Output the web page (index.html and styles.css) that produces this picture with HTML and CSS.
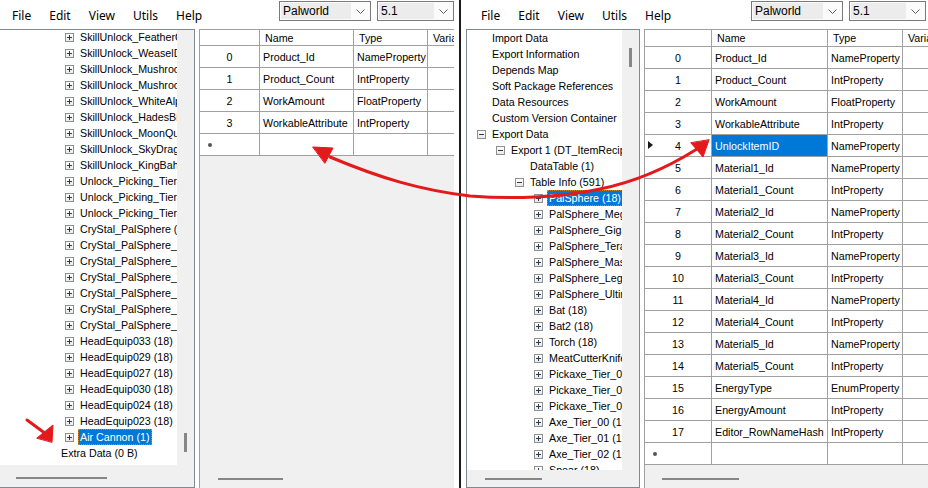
FILE: index.html
```html
<!DOCTYPE html>
<html>
<head>
<meta charset="utf-8">
<title>UAssetGUI comparison</title>
<link rel="stylesheet" href="styles.css">
</head>
<body>
<div class="screen">
  <div class="win win-left">
    <div class="menubar">
      <ul class="menu"><li>File</li><li>Edit</li><li>View</li><li>Utils</li><li>Help</li></ul>
      <div class="combo"><span class="combo-text">Palworld</span><span class="combo-arrow"><svg width="9" height="5" viewBox="0 0 9 5"><path d="M0.5 0.5 L4.5 4.5 L8.5 0.5" fill="none" stroke="#606060"/></svg></span></div>
      <div class="combo"><span class="combo-text">5.1</span><span class="combo-arrow"><svg width="9" height="5" viewBox="0 0 9 5"><path d="M0.5 0.5 L4.5 4.5 L8.5 0.5" fill="none" stroke="#606060"/></svg></span></div>
    </div>
    <div class="main">
      <div class="tree">
        <div class="tree-body">
          <div class="tree-view">
            <div class="tree-rows">
              <div class="node l3"><i class="exp plus"></i><span class="lbl">SkillUnlock_FeatherOstrich (18)</span></div>
              <div class="node l3"><i class="exp plus"></i><span class="lbl">SkillUnlock_WeaselDragon (18)</span></div>
              <div class="node l3"><i class="exp plus"></i><span class="lbl">SkillUnlock_Mushroom (18)</span></div>
              <div class="node l3"><i class="exp plus"></i><span class="lbl">SkillUnlock_MushroomDragon (18)</span></div>
              <div class="node l3"><i class="exp plus"></i><span class="lbl">SkillUnlock_WhiteAlpaca (18)</span></div>
              <div class="node l3"><i class="exp plus"></i><span class="lbl">SkillUnlock_HadesBird (18)</span></div>
              <div class="node l3"><i class="exp plus"></i><span class="lbl">SkillUnlock_MoonQueen (18)</span></div>
              <div class="node l3"><i class="exp plus"></i><span class="lbl">SkillUnlock_SkyDragon (18)</span></div>
              <div class="node l3"><i class="exp plus"></i><span class="lbl">SkillUnlock_KingBahamut (18)</span></div>
              <div class="node l3"><i class="exp plus"></i><span class="lbl">Unlock_Picking_Tier1 (18)</span></div>
              <div class="node l3"><i class="exp plus"></i><span class="lbl">Unlock_Picking_Tier2 (18)</span></div>
              <div class="node l3"><i class="exp plus"></i><span class="lbl">Unlock_Picking_Tier3 (18)</span></div>
              <div class="node l3"><i class="exp plus"></i><span class="lbl">CryStal_PalSphere (18)</span></div>
              <div class="node l3"><i class="exp plus"></i><span class="lbl">CryStal_PalSphere_Mega (18)</span></div>
              <div class="node l3"><i class="exp plus"></i><span class="lbl">CryStal_PalSphere_Giga (18)</span></div>
              <div class="node l3"><i class="exp plus"></i><span class="lbl">CryStal_PalSphere_Tera (18)</span></div>
              <div class="node l3"><i class="exp plus"></i><span class="lbl">CryStal_PalSphere_Master (18)</span></div>
              <div class="node l3"><i class="exp plus"></i><span class="lbl">CryStal_PalSphere_Legend (18)</span></div>
              <div class="node l3"><i class="exp plus"></i><span class="lbl">CryStal_PalSphere_Ultimate (18)</span></div>
              <div class="node l3"><i class="exp plus"></i><span class="lbl">HeadEquip033 (18)</span></div>
              <div class="node l3"><i class="exp plus"></i><span class="lbl">HeadEquip029 (18)</span></div>
              <div class="node l3"><i class="exp plus"></i><span class="lbl">HeadEquip027 (18)</span></div>
              <div class="node l3"><i class="exp plus"></i><span class="lbl">HeadEquip030 (18)</span></div>
              <div class="node l3"><i class="exp plus"></i><span class="lbl">HeadEquip024 (18)</span></div>
              <div class="node l3"><i class="exp plus"></i><span class="lbl">HeadEquip023 (18)</span></div>
              <div class="node l3"><i class="exp plus"></i><span class="lbl sel">Air Cannon (1)</span></div>
              <div class="node l2"><i class="exp none"></i><span class="lbl">Extra Data (0 B)</span></div>
            </div>
          </div>
          <div class="vscroll"><div class="vthumb"></div></div>
        </div>
        <div class="hscroll"><div class="hthumb"></div></div>
      </div>
      <div class="grid">
        <div class="grow hdr"><div class="cell rh"></div><div class="cell c-name">Name</div><div class="cell c-type">Type</div><div class="cell c-var">Variant</div></div>
        <div class="grow"><div class="cell rh">0</div><div class="cell c-name">Product_Id</div><div class="cell c-type">NameProperty</div><div class="cell c-var"></div></div>
        <div class="grow"><div class="cell rh">1</div><div class="cell c-name">Product_Count</div><div class="cell c-type">IntProperty</div><div class="cell c-var"></div></div>
        <div class="grow"><div class="cell rh">2</div><div class="cell c-name">WorkAmount</div><div class="cell c-type">FloatProperty</div><div class="cell c-var"></div></div>
        <div class="grow"><div class="cell rh">3</div><div class="cell c-name">WorkableAttribute</div><div class="cell c-type">IntProperty</div><div class="cell c-var"></div></div>
        <div class="grow"><div class="cell rh newrow"><i class="star"></i></div><div class="cell c-name"></div><div class="cell c-type"></div><div class="cell c-var"></div></div>
        <div class="grid-fill"></div>
        <div class="ghscroll"><div class="hthumb"></div></div>
      </div>
    </div>
  </div>

  <div class="divider"></div>

  <div class="win win-right">
    <div class="menubar">
      <ul class="menu"><li>File</li><li>Edit</li><li>View</li><li>Utils</li><li>Help</li></ul>
      <div class="combo"><span class="combo-text">Palworld</span><span class="combo-arrow"><svg width="9" height="5" viewBox="0 0 9 5"><path d="M0.5 0.5 L4.5 4.5 L8.5 0.5" fill="none" stroke="#606060"/></svg></span></div>
      <div class="combo"><span class="combo-text">5.1</span><span class="combo-arrow"><svg width="9" height="5" viewBox="0 0 9 5"><path d="M0.5 0.5 L4.5 4.5 L8.5 0.5" fill="none" stroke="#606060"/></svg></span></div>
    </div>
    <div class="main">
      <div class="tree">
        <div class="tree-body">
          <div class="tree-view">
            <div class="tree-rows">
              <div class="node l0"><i class="exp none"></i><span class="lbl">Import Data</span></div>
              <div class="node l0"><i class="exp none"></i><span class="lbl">Export Information</span></div>
              <div class="node l0"><i class="exp none"></i><span class="lbl">Depends Map</span></div>
              <div class="node l0"><i class="exp none"></i><span class="lbl">Soft Package References</span></div>
              <div class="node l0"><i class="exp none"></i><span class="lbl">Data Resources</span></div>
              <div class="node l0"><i class="exp none"></i><span class="lbl">Custom Version Container</span></div>
              <div class="node l0"><i class="exp"></i><span class="lbl">Export Data</span></div>
              <div class="node l1"><i class="exp"></i><span class="lbl">Export 1 (DT_ItemRecipeDataTable)</span></div>
              <div class="node l2"><i class="exp none"></i><span class="lbl">DataTable (1)</span></div>
              <div class="node l2"><i class="exp"></i><span class="lbl">Table Info (591)</span></div>
              <div class="node l3"><i class="exp plus"></i><span class="lbl sel">PalSphere (18)</span></div>
              <div class="node l3"><i class="exp plus"></i><span class="lbl">PalSphere_Mega (18)</span></div>
              <div class="node l3"><i class="exp plus"></i><span class="lbl">PalSphere_Giga (18)</span></div>
              <div class="node l3"><i class="exp plus"></i><span class="lbl">PalSphere_Tera (18)</span></div>
              <div class="node l3"><i class="exp plus"></i><span class="lbl">PalSphere_Master (18)</span></div>
              <div class="node l3"><i class="exp plus"></i><span class="lbl">PalSphere_Legend (18)</span></div>
              <div class="node l3"><i class="exp plus"></i><span class="lbl">PalSphere_Ultimate (18)</span></div>
              <div class="node l3"><i class="exp plus"></i><span class="lbl">Bat (18)</span></div>
              <div class="node l3"><i class="exp plus"></i><span class="lbl">Bat2 (18)</span></div>
              <div class="node l3"><i class="exp plus"></i><span class="lbl">Torch (18)</span></div>
              <div class="node l3"><i class="exp plus"></i><span class="lbl">MeatCutterKnife (18)</span></div>
              <div class="node l3"><i class="exp plus"></i><span class="lbl">Pickaxe_Tier_00 (18)</span></div>
              <div class="node l3"><i class="exp plus"></i><span class="lbl">Pickaxe_Tier_01 (18)</span></div>
              <div class="node l3"><i class="exp plus"></i><span class="lbl">Pickaxe_Tier_02 (18)</span></div>
              <div class="node l3"><i class="exp plus"></i><span class="lbl">Axe_Tier_00 (18)</span></div>
              <div class="node l3"><i class="exp plus"></i><span class="lbl">Axe_Tier_01 (18)</span></div>
              <div class="node l3"><i class="exp plus"></i><span class="lbl">Axe_Tier_02 (18)</span></div>
              <div class="node l3"><i class="exp plus"></i><span class="lbl">Spear (18)</span></div>
            </div>
          </div>
          <div class="vscroll"><div class="vthumb"></div></div>
        </div>
        <div class="hscroll"><div class="hthumb"></div></div>
      </div>
      <div class="grid">
        <div class="grow hdr"><div class="cell rh"></div><div class="cell c-name">Name</div><div class="cell c-type">Type</div><div class="cell c-var">Variant</div></div>
        <div class="grow"><div class="cell rh">0</div><div class="cell c-name">Product_Id</div><div class="cell c-type">NameProperty</div><div class="cell c-var"></div></div>
        <div class="grow"><div class="cell rh">1</div><div class="cell c-name">Product_Count</div><div class="cell c-type">IntProperty</div><div class="cell c-var"></div></div>
        <div class="grow"><div class="cell rh">2</div><div class="cell c-name">WorkAmount</div><div class="cell c-type">FloatProperty</div><div class="cell c-var"></div></div>
        <div class="grow"><div class="cell rh">3</div><div class="cell c-name">WorkableAttribute</div><div class="cell c-type">IntProperty</div><div class="cell c-var"></div></div>
        <div class="grow"><div class="cell rh current"><i class="cur-arrow"></i>4</div><div class="cell c-name selcell">UnlockItemID</div><div class="cell c-type">NameProperty</div><div class="cell c-var"></div></div>
        <div class="grow"><div class="cell rh">5</div><div class="cell c-name">Material1_Id</div><div class="cell c-type">NameProperty</div><div class="cell c-var"></div></div>
        <div class="grow"><div class="cell rh">6</div><div class="cell c-name">Material1_Count</div><div class="cell c-type">IntProperty</div><div class="cell c-var"></div></div>
        <div class="grow"><div class="cell rh">7</div><div class="cell c-name">Material2_Id</div><div class="cell c-type">NameProperty</div><div class="cell c-var"></div></div>
        <div class="grow"><div class="cell rh">8</div><div class="cell c-name">Material2_Count</div><div class="cell c-type">IntProperty</div><div class="cell c-var"></div></div>
        <div class="grow"><div class="cell rh">9</div><div class="cell c-name">Material3_Id</div><div class="cell c-type">NameProperty</div><div class="cell c-var"></div></div>
        <div class="grow"><div class="cell rh">10</div><div class="cell c-name">Material3_Count</div><div class="cell c-type">IntProperty</div><div class="cell c-var"></div></div>
        <div class="grow"><div class="cell rh">11</div><div class="cell c-name">Material4_Id</div><div class="cell c-type">NameProperty</div><div class="cell c-var"></div></div>
        <div class="grow"><div class="cell rh">12</div><div class="cell c-name">Material4_Count</div><div class="cell c-type">IntProperty</div><div class="cell c-var"></div></div>
        <div class="grow"><div class="cell rh">13</div><div class="cell c-name">Material5_Id</div><div class="cell c-type">NameProperty</div><div class="cell c-var"></div></div>
        <div class="grow"><div class="cell rh">14</div><div class="cell c-name">Material5_Count</div><div class="cell c-type">IntProperty</div><div class="cell c-var"></div></div>
        <div class="grow"><div class="cell rh">15</div><div class="cell c-name">EnergyType</div><div class="cell c-type">EnumProperty</div><div class="cell c-var"></div></div>
        <div class="grow"><div class="cell rh">16</div><div class="cell c-name">EnergyAmount</div><div class="cell c-type">IntProperty</div><div class="cell c-var"></div></div>
        <div class="grow"><div class="cell rh">17</div><div class="cell c-name">Editor_RowNameHash</div><div class="cell c-type">IntProperty</div><div class="cell c-var"></div></div>
        <div class="grow"><div class="cell rh newrow"><i class="star"></i></div><div class="cell c-name"></div><div class="cell c-type"></div><div class="cell c-var"></div></div>
        <div class="grid-fill"></div>
        <div class="ghscroll"><div class="hthumb"></div></div>
      </div>
    </div>
  </div>

  <svg class="annot" width="928" height="488" viewBox="0 0 928 488">
    <g fill="#e3191c" stroke="#e3191c" stroke-linecap="round" stroke-linejoin="round">
      <path d="M27 420 L46 434" stroke-width="3" fill="none"/>
      <polygon points="37,438 53,425 52,442" stroke-width="1"/>
      <path d="M330 157 C 380 178, 420 190, 470 196 C 510 199, 560 198, 600 189 C 640 181, 670 166, 697 149" fill="none" stroke-width="3"/>
      <polygon points="313,147 333,148 325,163" stroke-width="1"/>
      <polygon points="709,140 703,157 691,143" stroke-width="1"/>
    </g>
  </svg>
</div>
</body>
</html>
```

FILE: styles.css
```css
* { box-sizing: border-box; }
html, body { margin: 0; padding: 0; }
body {
  width: 928px;
  height: 488px;
  overflow: hidden;
  background: #fff;
  font-family: "Liberation Sans", Arial, sans-serif;
  font-size: 10.7px;
  color: #000;
}
.screen {
  position: relative;
  display: flex;
  width: 928px;
  height: 488px;
  overflow: hidden;
}
.win {
  flex: none;
  width: 467px;
  height: 488px;
  display: flex;
  flex-direction: column;
  background: #fff;
  overflow: hidden;
}
.win-left { margin-left: -8px; }
.divider { flex: none; width: 2px; background: #1c1c1c; }

/* menu bar */
.menubar {
  flex: none;
  height: 29px;
  display: grid;
  grid-template-columns: 270px 92px 77px;
  column-gap: 6px;
  padding-left: 11px;
  align-items: start;
}
.win-right .menubar { grid-template-columns: 273px 92px 77px; }
.menu {
  list-style: none;
  margin: 8px 0 0 0;
  padding: 0;
  display: flex;
  font-family: "Noto Sans", "Liberation Sans", sans-serif;
  font-size: 12px;
  line-height: 16px;
}
.menu li { padding: 0 9px; }
.combo {
  margin-top: 1px;
  height: 20px;
  border: 1px solid #7a7a7a;
  padding: 1px;
  display: flex;
  background: #fbfbfb;
}
.combo-text {
  flex: 1;
  background: #ececec;
  padding-left: 2px;
  font-size: 12px;
  line-height: 16px;
}
.combo-arrow {
  flex: none;
  width: 18px;
  display: flex;
  align-items: center;
  justify-content: center;
}

/* main split */
.main {
  flex: 1;
  display: flex;
  gap: 4px;
  padding-left: 5px;
  min-height: 0;
}

/* tree */
.tree {
  flex: none;
  width: 198px;
  display: flex;
  flex-direction: column;
  border: 1px solid #828790;
  background: #f0f0f0;
}
.win-right .tree { width: 174px; }
.tree-body {
  flex: none;
  height: 435px;
  display: flex;
}
.win-right .tree-body { height: 440px; }
.tree-view {
  flex: 1;
  background: #fff;
  overflow: hidden;
}
.win-left .tree-rows { margin-top: -1px; }
.node {
  display: flex;
  align-items: center;
  height: 16px;
  white-space: nowrap;
}
.l0 { padding-left: 10px; }
.l1 { padding-left: 29px; }
.l2 { padding-left: 48px; }
.l3 { padding-left: 67px; }
.exp {
  flex: none;
  position: relative;
  width: 9px;
  height: 9px;
  margin-right: 4px;
  border: 1px solid #8e8f8f;
  background: linear-gradient(#ffffff, #e8e8e8);
}
.exp::before {
  content: "";
  position: absolute;
  left: 1px;
  top: 3px;
  width: 5px;
  height: 1px;
  background: #23395f;
}
.exp.plus::after {
  content: "";
  position: absolute;
  left: 3px;
  top: 1px;
  width: 1px;
  height: 5px;
  background: #23395f;
}
.exp.none { border: none; background: none; }
.exp.none::before { display: none; }
.lbl {
  padding: 0 2px;
  line-height: 16px;
}
.lbl.sel {
  background: #0078d7;
  color: #fff;
  outline: 1px dotted #c8892c;
  outline-offset: -1px;
}
.vscroll {
  flex: none;
  width: 17px;
  background: #f0f0f0;
  padding-left: 7px;
}
.vthumb {
  width: 3px;
  height: 19px;
  margin-top: 403px;
  background: #868686;
}
.win-right .vthumb { margin-top: 18px; }
.hscroll {
  flex: 1;
  background: #f0f0f0;
  padding: 12px 0 0 18px;
}
.win-right .hscroll { padding-top: 8px; }
.hthumb {
  width: 91px;
  height: 2px;
  background: #868686;
}
.win-right .hscroll .hthumb { width: 57px; }

/* data grid */
.grid {
  flex: 1;
  min-width: 0;
  display: flex;
  flex-direction: column;
  border-left: 1px solid #a0a0a0;
  border-top: 1px solid #a0a0a0;
  background: #f0f0f0;
  overflow: hidden;
}
.win-left .grid { margin-right: 5px; }
.grow {
  flex: none;
  display: flex;
  height: 22px;
}
.grow.hdr { height: 16px; }
.win-right .grow.hdr { height: 17px; }
.cell {
  flex: none;
  height: 100%;
  background: #fff;
  border-right: 1px solid #a0a0a0;
  border-bottom: 1px solid #a0a0a0;
  padding-left: 3px;
  white-space: nowrap;
  overflow: hidden;
  display: flex;
  align-items: center;
}
.hdr .cell { padding-left: 5px; }
.rh {
  width: 60px;
  justify-content: center;
  padding-left: 0;
  position: relative;
}
.hdr .rh { padding-left: 0; }
.c-name { width: 94px; }
.c-type { width: 74px; }
.c-var { width: 120px; }
.win-right .rh { width: 67px; }
.win-right .c-name { width: 116px; }
.win-right .c-type { width: 75px; }
.selcell { background: #0078d7; color: #fff; }
.cur-arrow {
  position: absolute;
  left: 3px;
  top: 6px;
  width: 0;
  height: 0;
  border-left: 5px solid #1a1a1a;
  border-top: 4.5px solid transparent;
  border-bottom: 4.5px solid transparent;
}
.newrow { justify-content: flex-start; padding-left: 8px; }
.star {
  width: 4px;
  height: 4px;
  border-radius: 50%;
  background: #555;
}
.grid-fill { flex: 1; }
.ghscroll {
  flex: none;
  height: 17px;
  padding: 7px 0 0 18px;
}
.ghscroll .hthumb { width: 65px; }
.win-right .ghscroll { padding-left: 17px; }
.win-right .ghscroll .hthumb { width: 77px; }

/* red annotation arrows */
.annot {
  position: absolute;
  left: 0;
  top: 0;
  pointer-events: none;
}
```
